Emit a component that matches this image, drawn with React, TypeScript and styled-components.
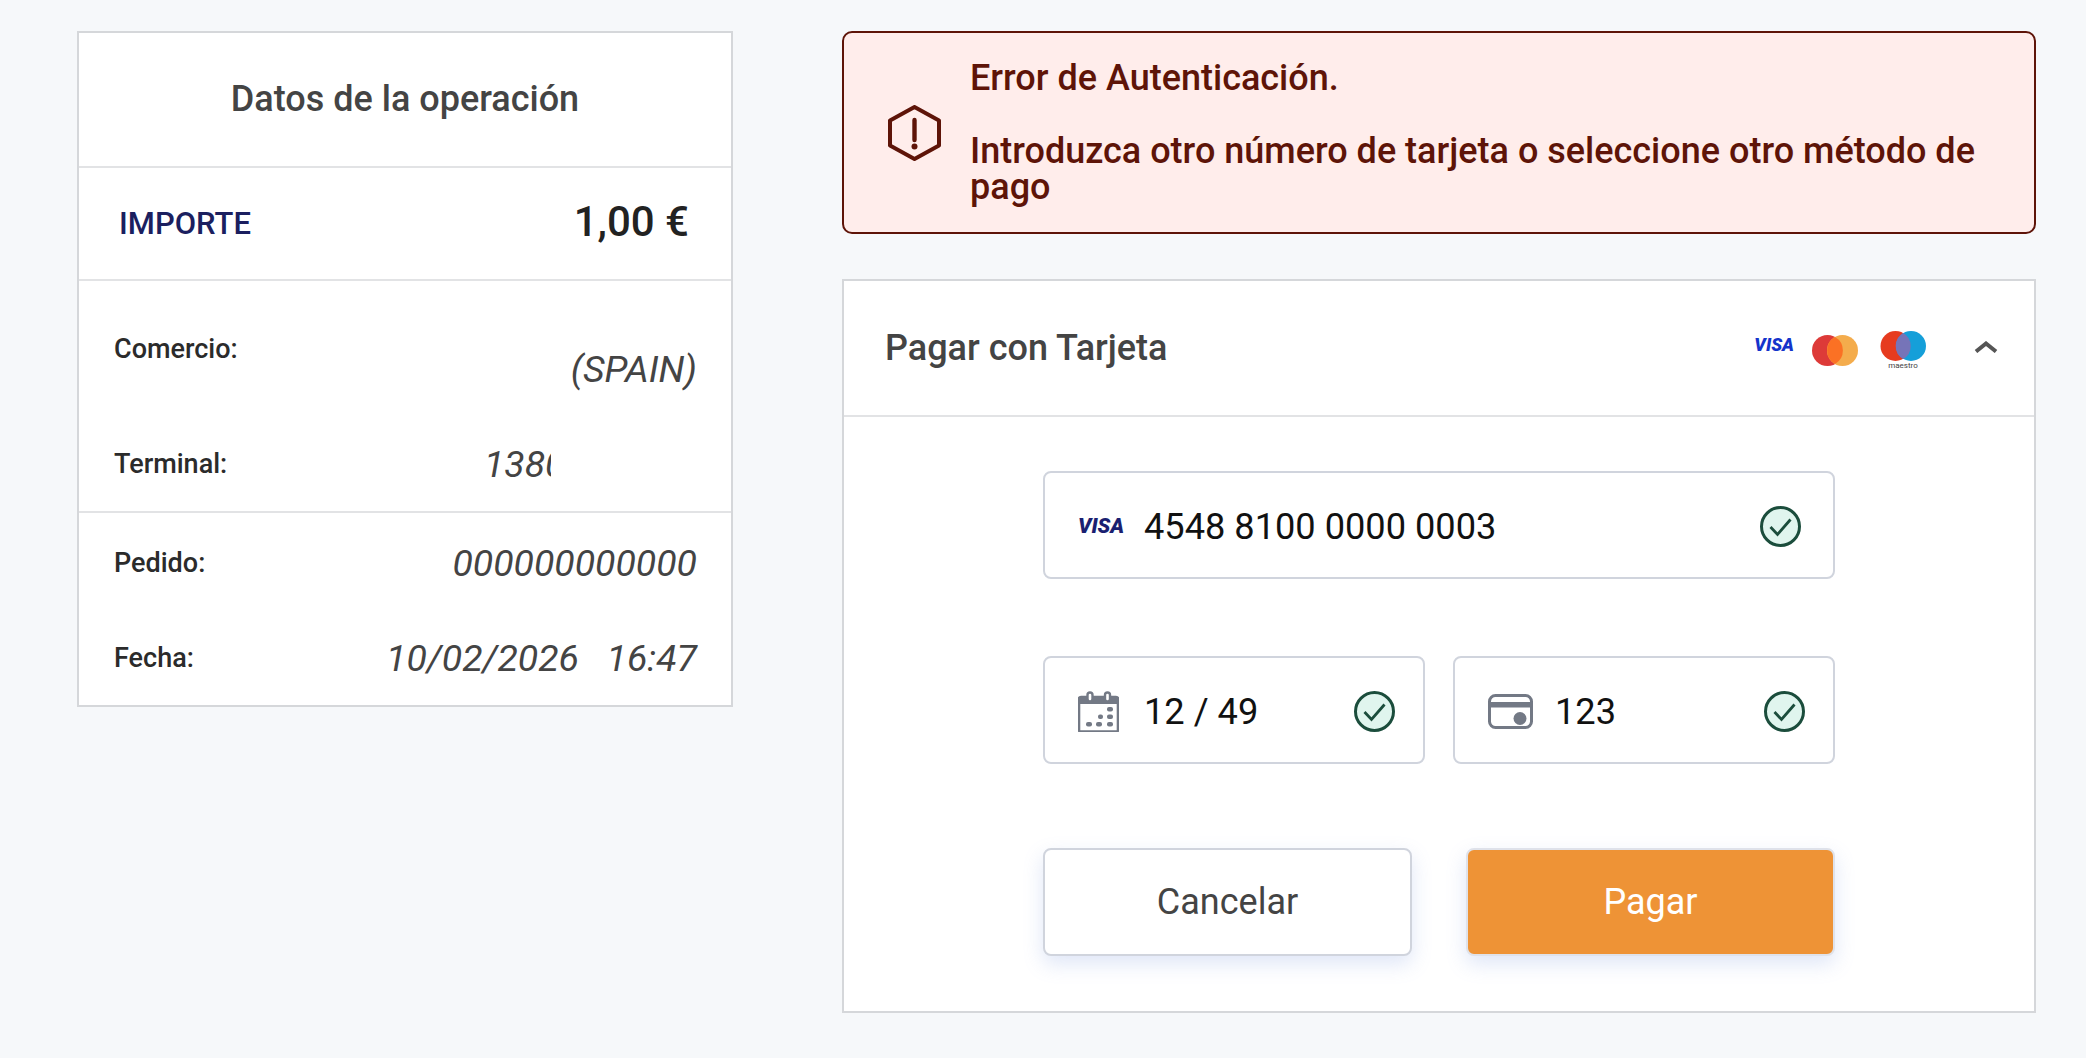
import React from "react";
import styled, { createGlobalStyle } from "styled-components";

const GlobalStyle = createGlobalStyle`
  html, body {
    margin: 0;
    padding: 0;
    background: #f6f8fa;
    font-family: Roboto, "Liberation Sans", sans-serif;
  }
  * {
    box-sizing: border-box;
  }
`;

const CheckIcon = () => (
  <CheckSvg viewBox="0 0 41 41">
    <circle cx="20.5" cy="20.5" r="19" fill="#e0f5ee" stroke="#1b4d3c" strokeWidth="3" />
    <path d="M10.5 21l7 7.5L30.5 13.500" fill="none" stroke="#1b4d3c" strokeWidth="2.8" />
  </CheckSvg>
);

const CalendarIcon = () => (
  <FieldSvg width="41" height="41" viewBox="0 0 41 41" gap={25}>
    <path d="M3 6h35a2 2 0 0 1 2 2v31a1.500 1.500 0 0 1-1.500 1.500h-36A1.500 1.500 0 0 1 1 39V8a2 2 0 0 1 2-2z" fill="none" stroke="#737985" strokeWidth="2.6" />
    <path d="M1 6h39v7H1z" fill="#737985" />
    <rect x="9.500" y="1.500" width="5" height="9" rx="2.500" fill="#fff" stroke="#737985" strokeWidth="2.400" />
    <rect x="27" y="1.500" width="5" height="9" rx="2.500" fill="#fff" stroke="#737985" strokeWidth="2.400" />
    <g fill="#737985">
      <rect x="29" y="16" width="6" height="4.500" rx="2" />
      <rect x="20" y="23.500" width="5" height="4.500" rx="2" />
      <rect x="29" y="23.500" width="6" height="4.500" rx="2" />
      <rect x="8" y="31" width="6" height="4.500" rx="2" />
      <rect x="18" y="31" width="6" height="4.500" rx="2" />
      <rect x="29" y="31" width="6" height="4.500" rx="2" />
    </g>
  </FieldSvg>
);

const CvvIcon = () => (
  <FieldSvg width="45" height="35" viewBox="0 0 45 35" gap={22}>
    <rect x="1.500" y="1.500" width="42" height="32" rx="6" fill="none" stroke="#737985" strokeWidth="3" />
    <rect x="1" y="8" width="43" height="5.500" fill="#737985" />
    <circle cx="32" cy="24.500" r="6.500" fill="#737985" />
  </FieldSvg>
);

const App = () => {
  return (
    <Page>
      <GlobalStyle />
      <SummaryCard>
        <SummaryTitle>Datos de la operación</SummaryTitle>
        <AmountRow>
          <AmountLabel>IMPORTE</AmountLabel>
          <AmountValue>1,00 €</AmountValue>
        </AmountRow>
        <MerchantSection>
          <DetailRow height={136}>
            <DetailLabel>Comercio:</DetailLabel>
            <DetailValue lowered>(SPAIN)</DetailValue>
          </DetailRow>
          <DetailRow height={94}>
            <DetailLabel>Terminal:</DetailLabel>
            <ClippedValue>1380</ClippedValue>
          </DetailRow>
        </MerchantSection>
        <OrderSection>
          <DetailRow height={95}>
            <DetailLabel>Pedido:</DetailLabel>
            <DetailValue>000000000000</DetailValue>
          </DetailRow>
          <DetailRow height={95}>
            <DetailLabel>Fecha:</DetailLabel>
            <DetailValue>10/02/2026 &nbsp;&nbsp;16:47</DetailValue>
          </DetailRow>
        </OrderSection>
      </SummaryCard>

      <MainColumn>
        <ErrorBox>
          <ErrorIcon viewBox="0 0 53 56">
            <path d="M26.500 2L51 15.500v25L26.500 54 2 40.500v-25z" fill="none" stroke="#5e1408" strokeWidth="4" strokeLinejoin="round" />
            <path d="M26.500 15v20" stroke="#5e1408" strokeWidth="4.400" strokeLinecap="round" />
            <circle cx="26.500" cy="41.500" r="3" fill="#5e1408" />
          </ErrorIcon>
          <ErrorText>
            Error de Autenticación.
            <br />
            <br />
            Introduzca otro número de tarjeta o seleccione otro método de pago
          </ErrorText>
        </ErrorBox>

        <PayPanel>
          <PanelHeader>
            <PanelTitle>Pagar con Tarjeta</PanelTitle>
            <BrandRow>
              <HeaderVisa>VISA</HeaderVisa>
              <MastercardLogo viewBox="0 0 46 31">
                <circle cx="15.500" cy="15.500" r="15.500" fill="#dd3a38" />
                <circle cx="30.500" cy="15.500" r="15.500" fill="#f4ac4c" />
                <path d="M23 2a15.500 15.500 0 0 1 0 27 15.500 15.500 0 0 1 0-27z" fill="#fb7124" />
              </MastercardLogo>
              <MaestroLogo>
                <svg width="46" height="30" viewBox="0 0 46 30">
                  <circle cx="15.500" cy="15" r="15" fill="#e63b1f" />
                  <circle cx="31" cy="15" r="15" fill="#159fd9" />
                  <path d="M23.200 2a15 15 0 0 1 0 26 15 15 0 0 1 0-26z" fill="#7674b8" />
                </svg>
                <MaestroText>maestro</MaestroText>
              </MaestroLogo>
              <Chevron viewBox="0 0 24 12">
                <path d="M2 10.500L12 2.500l10 8" fill="none" stroke="#555" strokeWidth="4" />
              </Chevron>
            </BrandRow>
          </PanelHeader>

          <PanelBody>
            <Field trailing={32}>
              <FieldVisa>VISA</FieldVisa>
              <FieldValue>4548 8100 0000 0003</FieldValue>
              <CheckIcon />
            </Field>
            <FieldPair>
              <Field>
                <CalendarIcon />
                <FieldValue>12 / 49</FieldValue>
                <CheckIcon />
              </Field>
              <Field>
                <CvvIcon />
                <FieldValue>123</FieldValue>
                <CheckIcon />
              </Field>
            </FieldPair>
            <ButtonRow>
              <ActionButton>Cancelar</ActionButton>
              <ActionButton primary>Pagar</ActionButton>
            </ButtonRow>
          </PanelBody>
        </PayPanel>
      </MainColumn>
    </Page>
  );
};

export default App;

const Page = styled.div`
  display: flex;
  align-items: flex-start;
  gap: 109px;
  width: 2086px;
  height: 1058px;
  padding: 31px 0 0 77px;
  overflow: hidden;
`;

const SummaryCard = styled.section`
  width: 656px;
  flex: none;
  background: #fff;
  border: 2px solid #d5d7da;
`;

const SummaryTitle = styled.h2`
  display: flex;
  align-items: center;
  justify-content: center;
  height: 133px;
  margin: 0;
  padding-bottom: 2px;
  font-size: 36px;
  font-weight: 500;
  color: #444;
`;

const AmountRow = styled.div`
  display: flex;
  align-items: center;
  justify-content: space-between;
  height: 115px;
  padding: 0 42px 4px 40px;
  border-top: 2px solid #e2e3e5;
  border-bottom: 2px solid #e2e3e5;
`;

const AmountLabel = styled.span`
  font-size: 31px;
  font-weight: 500;
  color: #1b1f5f;
  margin-top: 4px;
`;

const AmountValue = styled.span`
  font-size: 42px;
  font-weight: 500;
  color: #222;
`;

const MerchantSection = styled.div`
  border-bottom: 2px solid #e2e3e5;
`;

const OrderSection = styled.div`
  padding-top: 2px;
`;

const DetailRow = styled.div<{ height: number }>`
  display: flex;
  align-items: center;
  justify-content: space-between;
  height: ${props => props.height}px;
  padding: 0 34px 0 35px;
`;

const DetailLabel = styled.span`
  font-size: 27px;
  font-weight: 500;
  color: #2b2b2b;
`;

const DetailValue = styled.span<{ lowered?: boolean }>`
  font-size: 37.4px;
  font-weight: 400;
  font-style: italic;
  color: #444;
  white-space: nowrap;
  margin-top: ${props => (props.lowered ? "40px" : "0")};
`;

const ClippedValue = styled(DetailValue)`
  width: 67px;
  overflow: hidden;
  margin-right: 146px;
`;

const MainColumn = styled.div`
  display: flex;
  flex-direction: column;
  gap: 45px;
  width: 1194px;
  flex: none;
`;

const ErrorBox = styled.div`
  display: flex;
  align-items: center;
  gap: 29px;
  height: 203px;
  padding: 0 44px;
  background: #ffedeb;
  border: 2px solid #5e1408;
  border-radius: 10px;
`;

const ErrorIcon = styled.svg`
  width: 53px;
  height: 56px;
  flex: none;
`;

const ErrorText = styled.div`
  font-size: 36px;
  font-weight: 500;
  line-height: 36.5px;
  color: #5e1408;
`;

const PayPanel = styled.section`
  background: #fff;
  border: 2px solid #d5d7da;
  height: 734px;
`;

const PanelHeader = styled.div`
  display: flex;
  align-items: center;
  justify-content: space-between;
  height: 136px;
  padding: 0 36px 0 41px;
  border-bottom: 2px solid #e2e3e5;
`;

const PanelTitle = styled.h3`
  margin: 0;
  font-size: 36px;
  font-weight: 500;
  color: #444;
`;

const BrandRow = styled.div`
  display: flex;
  align-items: center;
`;

const HeaderVisa = styled.span`
  font-family: Roboto, "Liberation Sans", sans-serif;
  font-size: 18px;
  font-weight: 900;
  font-style: italic;
  color: #1434cb;
  margin: 0 18px 8px 0;
`;

const MastercardLogo = styled.svg`
  width: 46px;
  height: 31px;
  margin-right: 22px;
  margin-top: 4px;
`;

const MaestroLogo = styled.div`
  display: flex;
  flex-direction: column;
  align-items: center;
  width: 46px;
  margin: 6px 48px 0 0;
  svg {
    display: block;
  }
`;

const MaestroText = styled.span`
  font-size: 8px;
  line-height: 10px;
  color: #444;
`;

const Chevron = styled.svg`
  width: 24px;
  height: 12px;
  margin-bottom: 3px;
`;

const PanelBody = styled.div`
  display: flex;
  flex-direction: column;
  width: 792px;
  margin: 54px auto 0;
  gap: 77px;
`;

const FieldPair = styled.div`
  display: grid;
  grid-template-columns: 382px 382px;
  gap: 28px;
`;

const Field = styled.div<{ trailing?: number }>`
  display: flex;
  align-items: center;
  height: 108px;
  padding: 2px ${props => props.trailing ?? 28}px 0 33px;
  background: #fff;
  border: 2px solid #d0d4dd;
  border-radius: 8px;
`;

const FieldSvg = styled.svg<{ gap: number }>`
  flex: none;
  margin-right: ${props => props.gap}px;
`;

const FieldVisa = styled.span`
  font-family: Roboto, "Liberation Sans", sans-serif;
  width: 66px;
  flex: none;
  font-size: 21px;
  font-weight: 900;
  font-style: italic;
  color: #1a1f71;
`;

const FieldValue = styled.span`
  flex: 1;
  font-size: 36.2px;
  color: #111;
`;

const CheckSvg = styled.svg`
  width: 41px;
  height: 41px;
  flex: none;
`;

const ButtonRow = styled.div`
  display: grid;
  grid-template-columns: 369px 369px;
  justify-content: space-between;
  margin-top: 7px;
`;

const ActionButton = styled.button<{ primary?: boolean }>`
  height: 108px;
  font-family: Roboto, "Liberation Sans", sans-serif;
  font-size: 36px;
  color: ${props => (props.primary ? "#fff" : "#444")};
  background: ${props => (props.primary ? "#ee9336" : "#fff")};
  border: 2px solid ${props => (props.primary ? "#dfe2ea" : "#d0d4dd")};
  border-radius: 8px;
  box-shadow: 0 8px 20px rgba(120, 150, 220, 0.24);
`;
